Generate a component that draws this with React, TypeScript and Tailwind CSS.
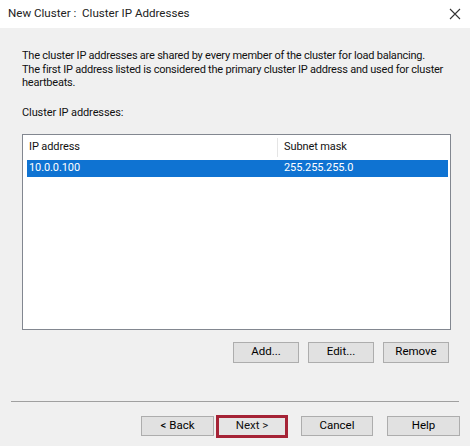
import React from "react";

function Btn({ children, className = "" }: { children: React.ReactNode; className?: string }) {
  return (
    <div
      className={
        "flex items-center justify-center bg-[#e1e1e1] border border-[#adadad] text-[11.5px] text-black " +
        className
      }
    >
      {children}
    </div>
  );
}

export default function App() {
  return (
    <div
      className="w-[470px] h-[446px] bg-[#f0f0f0] flex flex-col text-[#111] overflow-hidden"
      style={{ fontFamily: 'Roboto, "Noto Sans", sans-serif' }}
    >
      {/* Title bar */}
      <div className="h-[28px] bg-white flex items-center justify-between pl-[8px] pr-[8px] shrink-0">
        <span className="text-[11.6px] whitespace-nowrap text-[#222]">New Cluster :&nbsp; Cluster IP Addresses</span>
        <svg width="12" height="12" viewBox="0 0 12 12" className="mr-[1px]">
          <path d="M1 1 L11 11 M11 1 L1 11" stroke="#333" strokeWidth="1.1" fill="none" />
        </svg>
      </div>

      {/* Content */}
      <div className="px-[22px] pt-[21px] text-[11px] leading-[13.5px] tracking-[-0.22px] whitespace-nowrap">
        <p>The cluster IP addresses are shared by every member of the cluster for load balancing.</p>
        <p>The first IP address listed is considered the primary cluster IP address and used for cluster</p>
        <p>heartbeats.</p>
      </div>

      <div className="px-[22px] mt-[16px] text-[11px] leading-[14px] tracking-[-0.1px]">Cluster IP addresses:</div>

      <div className="ml-[22px] mt-[14px] w-[429px] h-[196px] bg-white border border-[#828790] flex flex-col text-[11px] tracking-[-0.1px]">
        <div className="h-[25px] flex items-center shrink-0">
          <div className="w-[255px] pl-[6px] h-[19px] flex items-center border-r border-[#e5e5e5]">IP address</div>
          <div className="pl-[6px]">Subnet mask</div>
        </div>
        <div className="ml-[4px] mr-[2px] h-[17px] bg-[#0f73d2] text-white flex items-center">
          <div className="w-[251px] pl-[2px]">10.0.0.100</div>
          <div className="pl-[6px]">255.255.255.0</div>
        </div>
      </div>

      <div className="flex justify-end gap-[9px] pr-[21px] mt-[12px]">
        <Btn className="w-[66px] h-[21px]">Add...</Btn>
        <Btn className="w-[66px] h-[21px]">Edit...</Btn>
        <Btn className="w-[66px] h-[21px]">Remove</Btn>
      </div>

      <div className="mx-[11px] mt-[38px] h-[1px] bg-[#a0a0a0]" />

      <div className="flex items-center justify-end pr-[10px] mt-[13px]">
        <Btn className="w-[73px] h-[20px]">&lt; Back</Btn>
        <div className="ml-[2px] border-[3px] border-[#a52336] w-[72px] h-[23px] flex">
          <div className="flex-1 flex items-center justify-center bg-[#e5e5e5] text-[11.5px]">Next &gt;</div>
        </div>
        <Btn className="w-[72px] h-[20px] ml-[13px]">Cancel</Btn>
        <Btn className="w-[73px] h-[20px] ml-[14px]">Help</Btn>
      </div>
    </div>
  );
}
